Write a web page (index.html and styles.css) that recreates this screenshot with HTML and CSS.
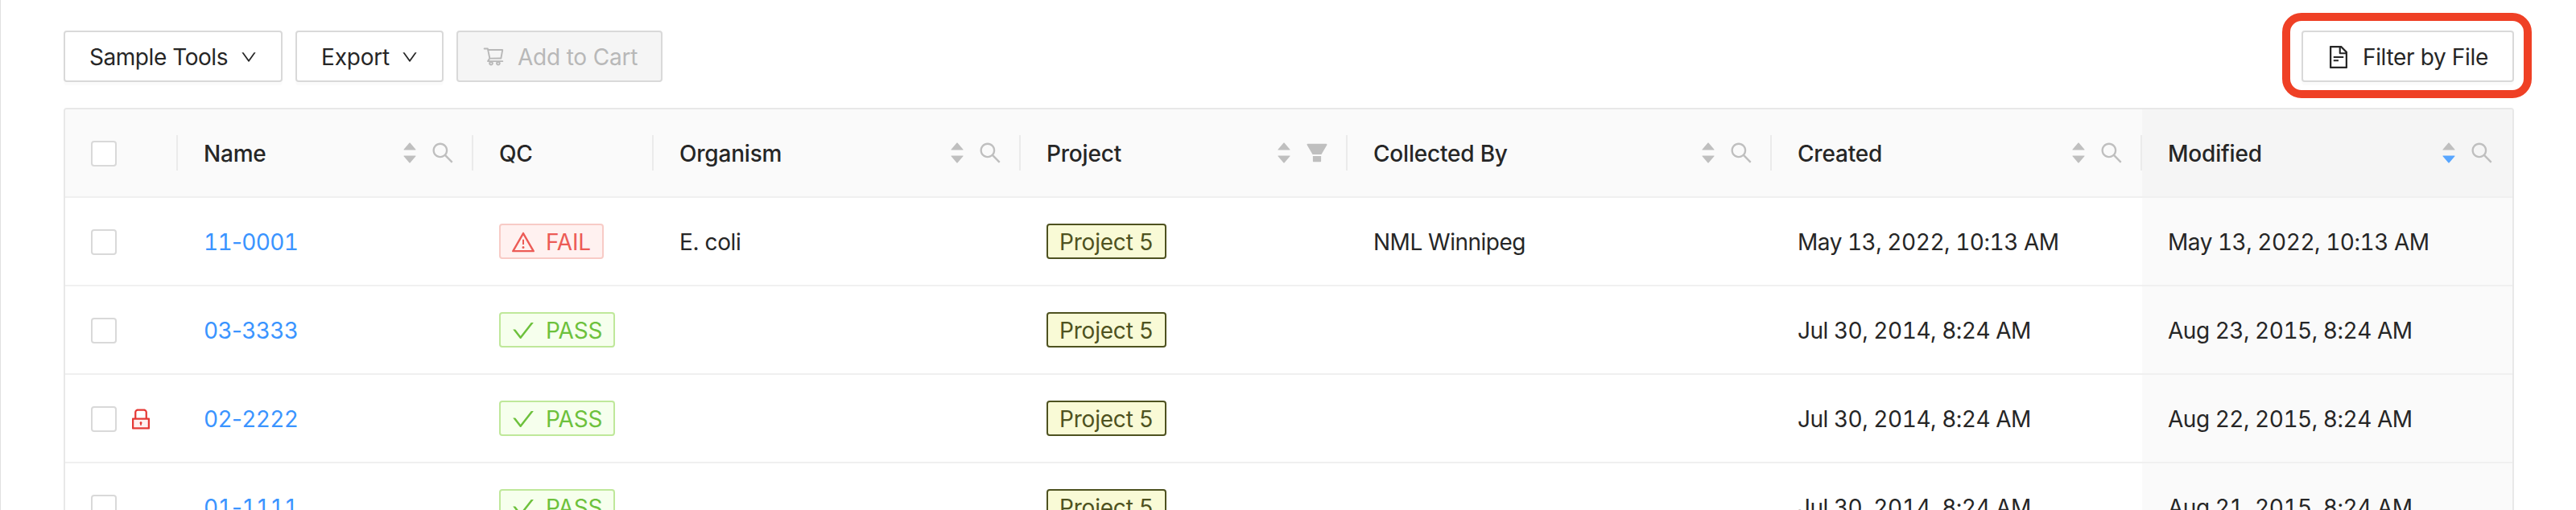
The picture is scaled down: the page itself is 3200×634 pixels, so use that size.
FILE: index.html
```html
<!DOCTYPE html>
<html lang="en">
<head>
<meta charset="utf-8">
<title>Samples</title>
<link rel="stylesheet" href="styles.css">
</head>
<body>
<svg class="defs" width="0" height="0">
  <symbol id="down" viewBox="64 64 896 896"><path d="M884 256h-75c-5.100 0-9.900 2.500-12.900 6.600L512 654.200 227.900 262.600c-3-4.100-7.800-6.600-12.900-6.600h-75c-6.500 0-10.300 7.400-6.500 12.700l352.600 486.100c12.800 17.600 39 17.600 51.700 0l352.600-486.100c3.900-5.300.1-12.700-6.400-12.700z"/></symbol>
  <symbol id="cart" viewBox="0 0 1024 1024"><path d="M922.900 701.900H327.400l29.900-60.900 496.800-.9c16.800 0 31.200-12 34.200-28.600l68.800-385.100c1.800-10.100-.9-20.500-7.500-28.400a34.990 34.990 0 0 0-26.600-12.500l-632-2.100-5.400-25.400c-3.400-16.200-18-28-34.600-28H96.500a35.300 35.300 0 1 0 0 70.600h125.900L246 312.800l58.100 281.300-74.800 122.100a34.960 34.960 0 0 0-3 36.800c6 11.900 18.100 19.400 31.500 19.400h62.800a102.430 102.430 0 0 0-20.600 61.700c0 56.600 46 102.600 102.600 102.600s102.600-46 102.600-102.600c0-22.300-7.400-44-20.600-61.700h161.100a102.430 102.430 0 0 0-20.600 61.700c0 56.600 46 102.600 102.600 102.600s102.600-46 102.600-102.600c0-22.300-7.400-44-20.600-61.700H923c19.400 0 35.300-15.800 35.300-35.300a35.420 35.420 0 0 0-35.400-35.200zM305.700 253l575.800 1.900-56.400 315.800-452.300.8L305.700 253zm96.900 612.700c-17.400 0-31.600-14.200-31.600-31.600 0-17.400 14.200-31.600 31.600-31.600s31.600 14.200 31.600 31.600a31.600 31.600 0 0 1-31.600 31.600zm325.100 0c-17.400 0-31.600-14.200-31.600-31.600 0-17.400 14.200-31.600 31.600-31.600s31.600 14.200 31.600 31.600a31.600 31.600 0 0 1-31.600 31.600z"/></symbol>
  <symbol id="file" viewBox="64 64 896 896"><path d="M854.600 288.600L639.400 73.400c-6-6-14.100-9.400-22.600-9.400H192c-17.700 0-32 14.300-32 32v832c0 17.700 14.300 32 32 32h640c17.700 0 32-14.300 32-32V311.300c0-8.500-3.400-16.700-9.400-22.700zM790.200 326H602V137.800L790.200 326zm1.800 562H232V136h302v216a42 42 0 0 0 42 42h216v494zM504 618H320c-4.400 0-8 3.600-8 8v48c0 4.400 3.600 8 8 8h184c4.400 0 8-3.600 8-8v-48c0-4.400-3.600-8-8-8zM312 490v48c0 4.400 3.600 8 8 8h384c4.400 0 8-3.600 8-8v-48c0-4.400-3.600-8-8-8H320c-4.400 0-8 3.600-8 8z"/></symbol>
  <symbol id="search" viewBox="64 64 896 896"><path d="M909.600 854.500L649.900 594.800C690.200 542.700 712 479 712 412c0-80.200-31.300-155.400-87.900-212.100-56.600-56.700-132-87.900-212.100-87.900s-155.500 31.300-212.100 87.900C143.200 256.500 112 331.800 112 412c0 80.100 31.300 155.500 87.900 212.100C256.500 680.800 331.800 712 412 712c67 0 130.600-21.800 182.700-62l259.700 259.600a8.200 8.200 0 0 0 11.600 0l43.600-43.500a8.200 8.200 0 0 0 0-11.600zM570.400 570.400C528 612.700 471.800 636 412 636s-116-23.300-158.400-65.600C211.300 528 188 471.800 188 412s23.300-116.100 65.600-158.400C296 211.300 352.200 188 412 188s116.100 23.200 158.400 65.600S636 352.200 636 412s-23.300 116.100-65.600 158.400z"/></symbol>
  <symbol id="filter" viewBox="64 64 896 896"><path d="M349 838c0 17.700 14.200 32 31.800 32h262.400c17.600 0 31.800-14.300 31.800-32V642H349v196zm531.100-684H143.900c-24.500 0-39.800 26.700-27.500 48l221.300 376h348.800l221.300-376c12.100-21.300-3.200-48-27.700-48z"/></symbol>
  <symbol id="caret-up" viewBox="0 0 1024 1024"><path d="M858.900 689L530.500 308.200c-9.400-10.900-27.500-10.900-37 0L165.100 689c-12.200 14.200-1.200 35 18.500 35h656.800c19.700 0 30.700-20.800 18.500-35z"/></symbol>
  <symbol id="caret-down" viewBox="0 0 1024 1024"><path d="M840.400 300H183.600c-19.700 0-30.700 20.800-18.500 35l328.400 380.800c9.400 10.900 27.500 10.900 37 0L858.900 335c12.200-14.200 1.200-35-18.500-35z"/></symbol>
  <symbol id="warning" viewBox="64 64 896 896"><path d="M464 720a48 48 0 1 0 96 0 48 48 0 1 0-96 0zm16-304v184c0 4.400 3.600 8 8 8h48c4.400 0 8-3.600 8-8V416c0-4.400-3.600-8-8-8h-48c-4.400 0-8 3.600-8 8zm475.700 440l-416-720c-6.200-10.700-16.900-16-27.700-16s-21.600 5.300-27.700 16l-416 720C56 877.400 71.400 904 96 904h832c24.600 0 40-26.600 27.700-48zm-783.500-27.900L512 239.900l339.800 588.200H172.200z"/></symbol>
  <symbol id="check" viewBox="64 64 896 896"><path d="M912 190h-69.900c-9.800 0-19.100 4.500-25.100 12.200L404.700 724.500 207 474a32 32 0 0 0-25.100-12.200H112c-6.700 0-10.400 7.700-6.300 12.900l273.900 347c12.800 16.200 37.400 16.200 50.300 0l488.400-618.900c4.100-5.100.4-12.800-6.300-12.800z"/></symbol>
  <symbol id="lock" viewBox="64 64 896 896"><path fill="#fff1f0" d="M232 536h560v304H232z"/><path d="M832 464h-68V240c0-70.700-57.300-128-128-128H388c-70.700 0-128 57.300-128 128v224h-68c-17.700 0-32 14.300-32 32v384c0 17.700 14.300 32 32 32h640c17.700 0 32-14.300 32-32V496c0-17.700-14.300-32-32-32zM332 240c0-30.900 25.100-56 56-56h248c30.900 0 56 25.100 56 56v224H332V240zm460 600H232V536h560v304zM484 701v53c0 4.400 3.600 8 8 8h40c4.400 0 8-3.600 8-8v-53a48.010 48.010 0 1 0-56 0z"/></symbol>
</svg>
<main class="page">
  <div class="toolbar">
    <button class="btn sample-tools"><span>Sample Tools</span><svg class="icon chevron"><use href="#down"/></svg></button>
    <button class="btn export"><span>Export</span><svg class="icon chevron"><use href="#down"/></svg></button>
    <button class="btn cart" disabled><svg class="icon"><use href="#cart"/></svg><span>Add to Cart</span></button>
    <div class="highlight"><button class="btn filter-file"><svg class="icon"><use href="#file"/></svg><span>Filter by File</span></button></div>
  </div>
  <div class="table">
    <div class="row head">
      <div class="cell"><span class="checkbox"></span></div>
      <div class="cell"><b>Name</b><span class="sorter"><svg><use href="#caret-up"/></svg><svg><use href="#caret-down"/></svg></span><svg class="tool"><use href="#search"/></svg></div>
      <div class="cell"><b>QC</b></div>
      <div class="cell"><b>Organism</b><span class="sorter"><svg><use href="#caret-up"/></svg><svg><use href="#caret-down"/></svg></span><svg class="tool"><use href="#search"/></svg></div>
      <div class="cell"><b>Project</b><span class="sorter"><svg><use href="#caret-up"/></svg><svg><use href="#caret-down"/></svg></span><svg class="tool"><use href="#filter"/></svg></div>
      <div class="cell"><b>Collected By</b><span class="sorter"><svg><use href="#caret-up"/></svg><svg><use href="#caret-down"/></svg></span><svg class="tool"><use href="#search"/></svg></div>
      <div class="cell"><b>Created</b><span class="sorter"><svg><use href="#caret-up"/></svg><svg><use href="#caret-down"/></svg></span><svg class="tool"><use href="#search"/></svg></div>
      <div class="cell sorted"><b>Modified</b><span class="sorter"><svg><use href="#caret-up"/></svg><svg class="active"><use href="#caret-down"/></svg></span><svg class="tool"><use href="#search"/></svg></div>
    </div>
    <div class="row">
      <div class="cell"><span class="checkbox"></span></div>
      <div class="cell"><a class="link">11<span class="dash">-</span>0001</a></div>
      <div class="cell"><span class="tag fail"><svg><use href="#warning"/></svg><span>FAIL</span></span></div>
      <div class="cell"><span class="organism">E. coli</span></div>
      <div class="cell"><span class="tag project">Project 5</span></div>
      <div class="cell"><span class="collector">NML Winnipeg</span></div>
      <div class="cell"><span class="date">May 13, 2022, 10:13 AM</span></div>
      <div class="cell sorted"><span class="date">May 13, 2022, 10:13 AM</span></div>
    </div>
    <div class="row">
      <div class="cell"><span class="checkbox"></span></div>
      <div class="cell"><a class="link">03<span class="dash">-</span>3333</a></div>
      <div class="cell"><span class="tag pass"><svg><use href="#check"/></svg><span>PASS</span></span></div>
      <div class="cell"></div>
      <div class="cell"><span class="tag project">Project 5</span></div>
      <div class="cell"></div>
      <div class="cell"><span class="date">Jul 30, 2014, 8:24 AM</span></div>
      <div class="cell sorted"><span class="date">Aug 23, 2015, 8:24 AM</span></div>
    </div>
    <div class="row">
      <div class="cell"><span class="checkbox"></span><svg class="lock"><use href="#lock"/></svg></div>
      <div class="cell"><a class="link">02<span class="dash">-</span>2222</a></div>
      <div class="cell"><span class="tag pass"><svg><use href="#check"/></svg><span>PASS</span></span></div>
      <div class="cell"></div>
      <div class="cell"><span class="tag project">Project 5</span></div>
      <div class="cell"></div>
      <div class="cell"><span class="date">Jul 30, 2014, 8:24 AM</span></div>
      <div class="cell sorted"><span class="date">Aug 22, 2015, 8:24 AM</span></div>
    </div>
    <div class="row">
      <div class="cell"><span class="checkbox"></span></div>
      <div class="cell"><a class="link">01<span class="dash">-</span>1111</a></div>
      <div class="cell"><span class="tag pass"><svg><use href="#check"/></svg><span>PASS</span></span></div>
      <div class="cell"></div>
      <div class="cell"><span class="tag project">Project 5</span></div>
      <div class="cell"></div>
      <div class="cell"><span class="date">Jul 30, 2014, 8:24 AM</span></div>
      <div class="cell sorted"><span class="date">Aug 21, 2015, 8:24 AM</span></div>
    </div>
  </div>
</main>
</body>
</html>
```
FILE: styles.css
```css
* { box-sizing: border-box; }
body {
  margin: 0;
  background: #fff;
  color: #262626;
  font: 28px/44px Inter, "Liberation Sans", sans-serif;
  letter-spacing: -0.2px;
}
svg { fill: currentColor; flex: none; display: block; }
.defs { position: absolute; }
.page {
  height: 634px;
  overflow: hidden;
  border-left: 1px solid #e0e0e0;
  padding: 38px 78px 0;
}
.toolbar { display: flex; gap: 16px; height: 64px; margin-bottom: 32px; }
.btn {
  display: flex;
  align-items: center;
  height: 64px;
  padding: 2px 30px 0;
  border: 2px solid #d9d9d9;
  border-radius: 4px;
  background: #fff;
  color: inherit;
  font: inherit;
  letter-spacing: inherit;
  white-space: nowrap;
  box-shadow: 0 4px 0 rgba(0, 0, 0, 0.016);
}
.btn .icon { width: 28px; height: 28px; }
.btn .chevron { width: 20px; height: 20px; }
.sample-tools { width: 272px; justify-content: space-between; letter-spacing: -0.45px; }
.export { width: 184px; justify-content: space-between; }
.cart { width: 256px; gap: 16px; background: #f5f5f5; color: #b8b8b8; box-shadow: none; }
.cart .icon { margin-top: -2px; }
.highlight {
  margin: -22px -23px -20px auto;
  width: 310px;
  height: 106px;
  padding: 12px 12px 0 14px;
  border: 10px solid #ef4025;
  border-radius: 24px;
}
.filter-file { width: 264px; gap: 16px; letter-spacing: -0.35px; }
.filter-file .icon { margin-top: -1px; }

.table {
  width: 3044px;
  border: 2px solid #e8e8e8;
  border-bottom: 0;
  border-radius: 4px 4px 0 0;
  overflow: hidden;
}
.row {
  display: grid;
  grid-template-columns: 140px 367px 224px 456px 406px 527px 460px 1fr;
  height: 110px;
}
.cell {
  display: flex;
  align-items: center;
  padding: 2px 0 0 32px;
  border-bottom: 2px solid #f0f0f0;
  position: relative;
  white-space: nowrap;
}
.sorted { background: #fafafa; }
.head .cell { background: #fafafa; padding-right: 24px; }
.head .sorted { background: #f5f5f5; }
.head .cell:not(:last-child)::after {
  content: "";
  position: absolute;
  right: 0;
  top: 32px;
  width: 2px;
  height: 44px;
  background: #ebebeb;
}
.head b { font-weight: 500; letter-spacing: -0.2px; }
.sorter { display: grid; margin: -2px 0 0 auto; color: #bfbfbf; }
.sorter svg { width: 22px; height: 22px; }
.sorter svg + svg { margin-top: -6px; }
.sorter .active { color: #58a6ff; }
.tool { width: 28px; height: 28px; margin: -2px 0 0 16px; color: #bfbfbf; }
.checkbox {
  width: 32px;
  height: 32px;
  border: 2px solid #d9d9d9;
  border-radius: 4px;
  background: #fff;
}
.lock { width: 28px; height: 28px; margin-left: 16px; color: #e53935; }
.organism { letter-spacing: -0.4px; }
.collector { letter-spacing: -0.5px; }
.link { color: #3a94ff; font-variant-numeric: tabular-nums; letter-spacing: -0.65px; }
.dash { font-variant-numeric: normal; }
.date { font-variant-numeric: tabular-nums; letter-spacing: -0.48px; }
.tag {
  display: flex;
  align-items: center;
  height: 44px;
  margin-top: -2px;
  padding: 2px 14px 0;
  border: 2px solid;
  border-radius: 4px;
}
.tag svg { width: 28px; height: 28px; margin-right: 14px; }
.fail { color: #ec5b56; background: #fff1f0; border-color: #f8cbc6; width: 130px; }
.pass { color: #6dc13c; background: #f6ffed; border-color: #bfe89a; width: 144px; }
.project { color: #4e5220; background: #f9fad6; width: 149px; }
```
